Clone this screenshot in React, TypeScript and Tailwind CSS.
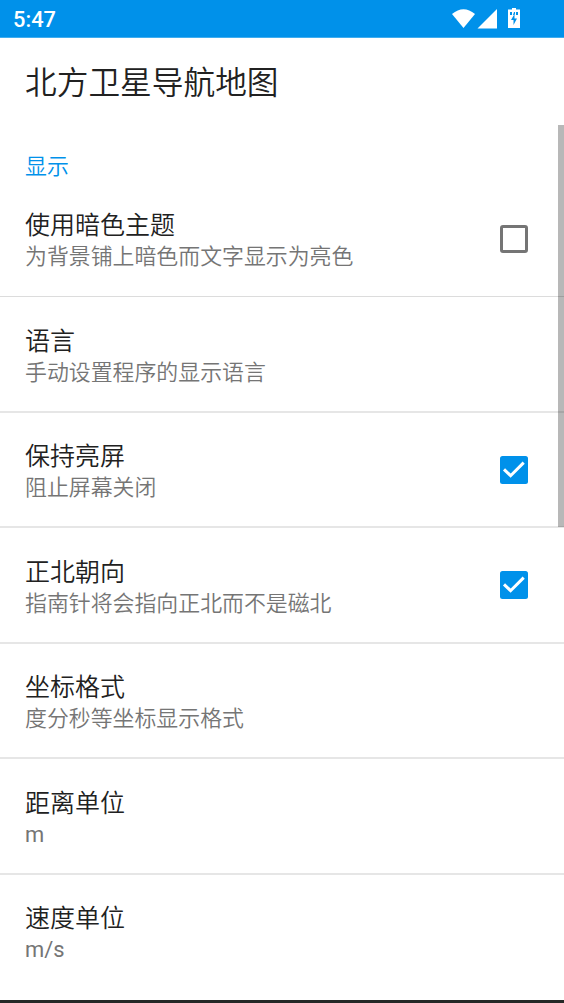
const rows = [
  { title: '使用暗色主题', note: '为背景铺上暗色而文字显示为亮色', check: false },
  { title: '语言', note: '手动设置程序的显示语言' },
  { title: '保持亮屏', note: '阻止屏幕关闭', check: true },
  { title: '正北朝向', note: '指南针将会指向正北而不是磁北', check: true },
  { title: '坐标格式', note: '度分秒等坐标显示格式' },
  { title: '距离单位', note: 'm' },
  { title: '速度单位', note: 'm/s' },
];

function Checkbox({ checked }: { checked: boolean }) {
  return checked ? (
    <svg className="mb-px size-7 shrink-0" viewBox="0 0 28 28">
      <rect width="28" height="28" rx="2.5" fill="#0091ea" />
      <path d="M4 13.300 10.600 19.700 23.700 6.600" fill="none" stroke="#fff" strokeWidth="3" />
    </svg>
  ) : (
    <svg className="mb-px size-7 shrink-0" viewBox="0 0 28 28">
      <rect x="1.5" y="1.5" width="25" height="25" rx="1.5" fill="none" stroke="#757575" strokeWidth="3" />
    </svg>
  );
}

export default function App() {
  return (
    <div className="relative flex h-[1003px] w-[564px] flex-col overflow-hidden bg-white font-['Roboto','Noto_Sans_CJK_SC',sans-serif]">
      <div className="flex h-[38px] shrink-0 items-center justify-between border-b border-[#40adef] bg-[#0091ea] pl-[13px] pr-[43px] text-white">
        <span className="pt-px text-[21.8px] font-medium leading-[37px]">5:47</span>
        <svg className="h-[38px] w-[70px]" viewBox="451 0 70 38" fill="#fff">
          <path d="M463.5 28 452 14Q463.5 4.500 475 14Z" />
          <path d="M497 9V28.500H477.500Z" />
          <path fillRule="evenodd" d="M512 8H516V9.500H520V28H508V9.500H512ZM510 12V15H512V12ZM514 12 513 15H515L515 12ZM516 12V15H518V12ZM514.500 14 511 20H513.500V25L517 18.500H514.500Z" />
        </svg>
      </div>
      <h1 className="h-[87px] shrink-0 pl-[25px] pt-[2px] text-[31.7px] font-[350] leading-[87px] text-[#212121]">北方卫星导航地图</h1>
      <div className="h-[56.5px] shrink-0 pl-[25px] pt-[26px] text-[21.9px] font-[350] leading-[32px] text-[#0091ea]">显示</div>
      <div className="shrink-0">
        {rows.map((r) => (
          <div
            key={r.title}
            className="flex h-[115.5px] items-center justify-between pl-[25px] pr-9 shadow-[inset_0_-2px_0_#e6e6e6] first:shadow-[inset_0_-1px_0_#dcdcdc] last:shadow-none"
          >
            <div className="pt-[5px]">
              <div className="text-[25px] font-[350] leading-[31px] text-[#212121]">{r.title}</div>
              <div className={r.note.startsWith('m') ? 'text-[21.9px] font-normal leading-8 text-[#757575]' : 'text-[21.9px] font-[350] leading-8 text-[#757575]'}>
                {r.note}
              </div>
            </div>
            {r.check !== undefined && <Checkbox checked={r.check} />}
          </div>
        ))}
      </div>
      <div className="absolute right-0 top-[125px] h-[402px] w-[6px] bg-black/28" />
      <div className="absolute bottom-0 left-0 h-[3px] w-full bg-[#242826]" />
    </div>
  );
}
